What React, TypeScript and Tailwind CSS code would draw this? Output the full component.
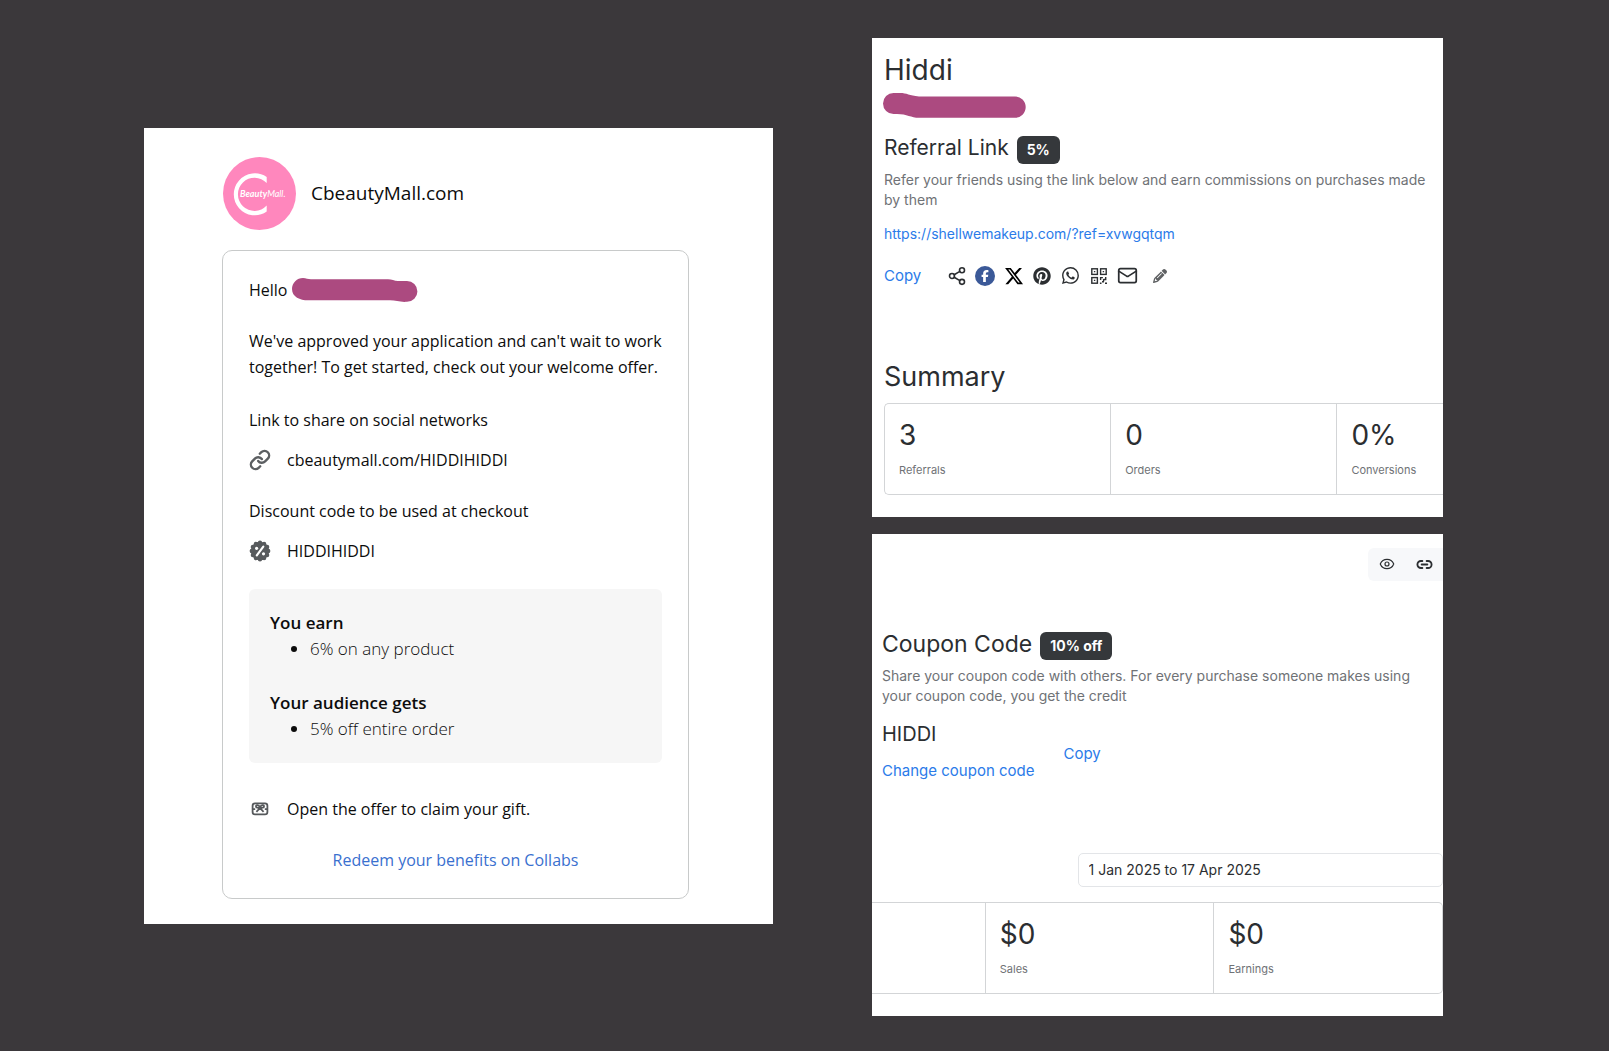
import React from 'react';
import { Share2, Link, Link2, Eye, Mail } from 'lucide-react';
import { FaFacebookF, FaXTwitter, FaPinterest, FaPencil } from 'react-icons/fa6';
import { BsWhatsapp } from 'react-icons/bs';

function Logo() {
  return (
    <svg viewBox="0 0 73 73" className="size-[73px] shrink-0" role="img" aria-label="C BeautyMall">
      <circle cx="36.5" cy="36.5" r="36.5" fill="#ff87bd" />
      <path d="M43.7 20A21 21 0 1 0 43.7 54.6V48.6A16.6 16.6 0 1 1 43.7 26Z" fill="#fff" />
      <text x="17" y="39.5" fill="#fff" fontFamily="Lato, sans-serif" fontSize="9" fontStyle="italic">
        <tspan fontWeight="700">Beauty</tspan>
        <tspan fontWeight="400">Mall.</tspan>
      </text>
    </svg>
  );
}

function DiscountIcon() {
  const lobes = Array.from({ length: 12 }, (_, i) => (i * Math.PI) / 6);
  return (
    <svg viewBox="0 0 22 22" className="size-[22px] shrink-0" aria-hidden="true">
      <g fill="#575a5d">
        <circle cx="11" cy="11" r="9.2" />
        {lobes.map((a) => (
          <circle key={a} cx={11 + 8.2 * Math.cos(a)} cy={11 + 8.2 * Math.sin(a)} r="2.2" />
        ))}
      </g>
      <path d="M14.3 6.6 7.8 15.4" stroke="#fff" strokeWidth="2.2" strokeLinecap="round" />
      <circle cx="7.6" cy="8.3" r="1.6" fill="#fff" />
      <circle cx="14.5" cy="13.8" r="1.6" fill="#fff" />
    </svg>
  );
}

function GiftCardIcon() {
  return (
    <svg viewBox="0 0 22 22" className="size-[22px] shrink-0" fill="none" stroke="#55585b" strokeWidth="1.8" aria-hidden="true">
      <rect x="3.6" y="5.3" width="14.8" height="11" rx="2.4" />
      <path d="M3.6 11.2h2.6M15.8 11.2h2.6M11 9.6C10 6.6 7 6.4 7 8.4c0 1.4 2 1.6 4 1.2 2 .4 4 .2 4-1.2 0-2-3-1.8-4 1.2ZM11 10l-3.6 3.8M11 10l3.6 3.8" />
    </svg>
  );
}

function QrIcon() {
  return (
    <svg viewBox="0 0 16 16" className="size-4" fill="none" stroke="currentColor" strokeWidth="1.4" aria-hidden="true">
      <rect x="0.8" y="0.8" width="5.6" height="5.6" />
      <rect x="9.6" y="0.8" width="5.6" height="5.6" />
      <rect x="0.8" y="9.6" width="5.6" height="5.6" />
      <path d="M2.9 3.6h1.4M11.7 3.6h1.4M2.9 12.4h1.4" />
      <path d="M8.9 9.6h3M9.6 9v3M12.6 11.5h2.8M14.7 9v3M12.6 11v2.5M8.9 15.2h1.6M11 13.8h2M14 15.2h2" />
    </svg>
  );
}

function FacebookIcon() {
  return (
    <span className="flex size-5 items-end justify-center rounded-full bg-[#3b5998] pb-1 text-white">
      <FaFacebookF size={12} />
    </span>
  );
}

function RedactedName() {
  return (
    <svg viewBox="0 0 126 24" className="h-6 w-[126px]" role="img" aria-label="Hidden name">
      <path
        d="M11 0C14 0 16 1.3 19 1.3H96C100 1.3 102 3 106 3H115A10.4 10.4 0 0 1 115 23.8C108 24.4 104 22.3 98 22.3H16C8 22.3 0 19 0 11A11 11 0 0 1 11 0Z"
        fill="#ac4a80"
      />
    </svg>
  );
}

function RedactedAddress() {
  return (
    <svg viewBox="0 0 143 25" className="block h-[25px] w-[143px]" role="img" aria-label="Hidden address">
      <path
        d="M10.5 0H17C24 0 26 2.6 36 3.4H132A10.7 10.7 0 0 1 132 24.8H36C28 24.8 24 21 14 21H10.5A10.5 10.5 0 0 1 10.5 0Z"
        fill="#ac4a80"
      />
    </svg>
  );
}

function OfferEmail() {
  return (
    <section className="min-w-0 bg-white pt-[29px] pr-[84px] pb-[25px] pl-[78px] font-['Open_Sans',sans-serif] text-base leading-[26px] text-[#0c0c0c]">
      <header className="flex items-center gap-[15px] pl-px">
        <Logo />
        <h1 className="text-[19px]">CbeautyMall.com</h1>
      </header>
      <div className="mt-5 rounded-[10px] border border-[#c8caca] px-[26px] pt-[26px] pb-[25px]">
        <p className="flex items-center gap-[5px]">
          Hello <RedactedName />
        </p>
        <p className="mt-[25px] whitespace-nowrap">
          We've approved your application and can't wait to work
          <br />
          together! To get started, check out your welcome offer.
        </p>
        <p className="mt-[27px]">Link to share on social networks</p>
        <p className="mt-[14px] flex items-center gap-4">
          <Link size={22} strokeWidth={2.6} color="#5c5f62" className="shrink-0" />
          cbeautymall.com/HIDDIHIDDI
        </p>
        <p className="mt-[25px]">Discount code to be used at checkout</p>
        <p className="mt-[14px] flex items-center gap-4">
          <DiscountIcon />
          HIDDIHIDDI
        </p>
        <div className="mt-[25px] rounded-md bg-[#f6f6f6] px-[21px] py-[21px] text-[17px]">
          <h2 className="font-semibold">You earn</h2>
          <ul className="list-disc pl-10 font-light">
            <li>6% on any product</li>
          </ul>
          <h2 className="mt-7 font-semibold">Your audience gets</h2>
          <ul className="list-disc pl-10 font-light">
            <li>5% off entire order</li>
          </ul>
        </div>
        <p className="mt-[33px] flex items-center gap-4">
          <GiftCardIcon />
          Open the offer to claim your gift.
        </p>
        <p className="mt-[25px] text-center">
          <a href="#redeem" className="text-[#3a70cf]">Redeem your benefits on Collabs</a>
        </p>
      </div>
    </section>
  );
}

function Badge({ children }: { children: React.ReactNode }) {
  return (
    <span className="mt-1 flex h-7 items-center rounded-md bg-[#35383b] px-2.5 text-sm font-bold text-white">{children}</span>
  );
}

function Stat({ value, label }: { value: string; label: string }) {
  return (
    <div className="pt-[11px] pb-[14px] pl-[14px]">
      <dd className="text-[28px] leading-10">{value}</dd>
      <dt className="mt-[5px] text-[11px] leading-5 text-[#6f7276]">{label}</dt>
    </div>
  );
}

const shareActions = [
  { label: 'Share', icon: <Share2 size={20} strokeWidth={1.9} /> },
  { label: 'Facebook', icon: <FacebookIcon /> },
  { label: 'X', icon: <FaXTwitter size={20} color="#000" /> },
  { label: 'Pinterest', icon: <FaPinterest size={18} /> },
  { label: 'WhatsApp', icon: <BsWhatsapp size={17} /> },
  { label: 'QR code', icon: <QrIcon /> },
  { label: 'Email', icon: <Mail size={21} strokeWidth={2} /> },
];

function ReferralPanel() {
  return (
    <section className="min-w-0 bg-white pt-[14px] pb-[22px]">
      <div className="px-[11px]">
        <h1 className="pl-px text-[28px] leading-9">Hiddi</h1>
        <div className="mt-[5px]">
          <RedactedAddress />
        </div>
      </div>
      <div className="pl-3">
        <div className="mt-[14px] flex items-center gap-2">
          <h2 className="text-[21px] leading-7">Referral Link</h2>
          <Badge>5%</Badge>
        </div>
        <p className="mt-1.5 pr-3 text-sm leading-5 text-[#6f7276]">
          Refer your friends using the link below and earn commissions on purchases made by them
        </p>
        <a href="#referral" className="mt-[14px] block text-sm leading-5 text-[#2b7be9]">
          https://shellwemakeup.com/?ref=xvwgqtqm
        </a>
        <div className="mt-5 flex items-center">
          <button type="button" className="text-[15px] leading-6 text-[#2b7be9]">Copy</button>
          <div className="ml-[21px] grid w-[200px] grid-cols-7">
            {shareActions.map(({ label, icon }) => (
              <button key={label} type="button" aria-label={label} className="flex h-6 items-center justify-center">
                {icon}
              </button>
            ))}
          </div>
          <button type="button" aria-label="Edit link" className="ml-1 flex h-6 w-7 items-center justify-center text-[#5f6163]">
            <FaPencil size={14} />
          </button>
        </div>
        <h2 className="mt-[71px] text-[27px] leading-9">Summary</h2>
        <dl className="mt-2 grid grid-cols-[227fr_227fr_106fr] divide-x divide-[#d3d5d7] rounded-l-[5px] border border-r-0 border-[#d3d5d7]">
          <Stat value="3" label="Referrals" />
          <Stat value="0" label="Orders" />
          <Stat value="0%" label="Conversions" />
        </dl>
      </div>
    </section>
  );
}

function CouponPanel() {
  return (
    <section className="min-w-0 bg-white pt-[14px] pb-[22px]">
      <div className="ml-auto flex w-[75px] rounded-l-md bg-[#f7f8fa]">
        <button type="button" aria-label="Preview" className="flex h-[33px] w-[38px] items-center justify-center">
          <Eye size={16} strokeWidth={1.8} />
        </button>
        <button type="button" aria-label="Copy page link" className="flex h-[33px] w-9 items-center justify-center">
          <Link2 size={17} strokeWidth={2.6} />
        </button>
      </div>
      <div className="mt-[47px] flex items-center gap-2 pl-2.5">
        <h2 className="text-[23px] leading-7">Coupon Code</h2>
        <Badge>10% off</Badge>
      </div>
      <p className="mt-1.5 pr-5 pl-2.5 text-sm leading-5 text-[#6f7276]">
        Share your coupon code with others. For every purchase someone makes using your coupon code, you get the credit
      </p>
      <div className="mt-[14px] flex items-center gap-[29px] pl-2.5">
        <div>
          <p className="text-xl leading-7">HIDDI</p>
          <button type="button" className="mt-[11px] block text-[15px] leading-6 text-[#2b7be9]">Change coupon code</button>
        </div>
        <button type="button" className="pt-1.5 text-[15px] leading-6 text-[#2b7be9]">Copy</button>
      </div>
      <div className="mt-[70px] flex justify-end">
        <input
          type="text"
          readOnly
          aria-label="Date range"
          value="1 Jan 2025 to 17 Apr 2025"
          className="h-[34px] w-[64%] rounded-[5px] border border-[#e3e5e8] pl-2.5 text-sm outline-none"
        />
      </div>
      <dl className="mt-[15px] grid grid-cols-[114fr_229fr_228fr] divide-x divide-[#d3d5d7] rounded-r-[5px] border border-l-0 border-[#d3d5d7]">
        <div />
        <Stat value="$0" label="Sales" />
        <Stat value="$0" label="Earnings" />
      </dl>
    </section>
  );
}

export default function App() {
  return (
    <main className="grid min-h-screen grid-cols-[629fr_571fr] items-center gap-x-[99px] bg-[#3b383b] pr-[166px] pl-36">
      <OfferEmail />
      <div className="flex min-w-0 flex-col gap-[17px] pt-0.5 font-[Inter,sans-serif] text-[#2b2e31]">
        <ReferralPanel />
        <CouponPanel />
      </div>
    </main>
  );
}
